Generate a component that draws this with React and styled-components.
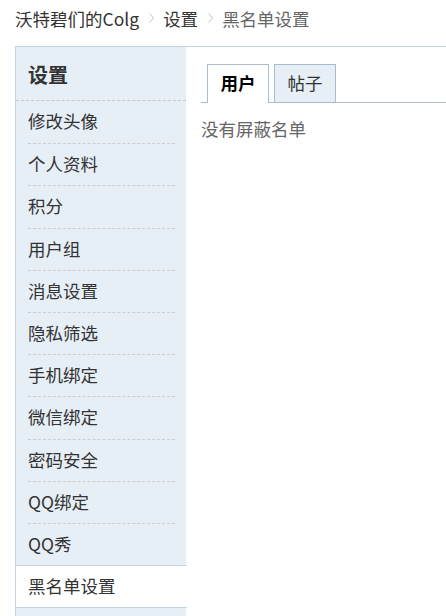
import React from 'react';
import styled, { createGlobalStyle } from 'styled-components';

const GlobalStyle = createGlobalStyle`
  body {
    margin: 0;
    background: #fff;
    font-family: 'Microsoft YaHei', 'Noto Sans CJK SC', sans-serif;
    color: #333;
  }
`;

const Page = styled.div`
  width: 446px;
  height: 616px;
  overflow: hidden;
`;

const Crumbs = styled.div`
  display: flex;
  align-items: center;
  height: 46px;
  padding: 0 0 10px 15px;
  box-sizing: border-box;
  font-size: 17.5px;

  span {
    color: #333;
  }

  span.last {
    color: #666;
  }
`;

const Chevron = styled.svg`
  width: 5px;
  height: 10px;
  margin: 0 9px 0 10px;
  flex: none;
`;

const Layout = styled.div`
  display: flex;
  margin-left: 15px;
  border-top: 1px solid #c2d5e3;
  min-height: 569px;
`;

const Side = styled.div`
  width: 170px;
  flex: none;
  background: #e6eef6;
  border-left: 1px solid #c2d5e3;
`;

const SideTitle = styled.h2`
  margin: 0;
  height: 54px;
  padding-left: 12px;
  box-sizing: border-box;
  border-bottom: 1px dashed #c8c8c8;
  font-size: 20px;
  font-weight: 700;
  line-height: 56px;
  color: #333;
`;

const Menu = styled.ul`
  margin: 0;
  padding: 0;
  list-style: none;
`;

const MenuItem = styled.li`
  padding: 0 11px 0 12px;
  background: ${({ $active }) => ($active ? '#fff' : 'transparent')};
  border-top: ${({ $active }) => ($active ? '1px solid #c2d5e3' : 'none')};
  border-bottom: ${({ $active }) => ($active ? '1px solid #c2d5e3' : 'none')};
  margin-right: ${({ $active }) => ($active ? '-1px' : '0')};

  a {
    display: block;
    height: ${({ $active }) => ($active ? '41px' : '42.2px')};
    box-sizing: border-box;
    border-top: ${({ $first, $active }) => ($first || $active ? 'none' : '1px dashed #cdcdcd')};
    font-size: 17.5px;
    line-height: 39px;
    color: #333;
    text-decoration: none;
    white-space: nowrap;
  }
`;

const Main = styled.div`
  flex: 1;
  padding: 17px 0 0 15px;
`;

const Tabs = styled.ul`
  display: flex;
  gap: 5px;
  margin: 0;
  padding: 0 0 0 6px;
  height: 38px;
  list-style: none;
  border-bottom: 1px solid #a9bccd;
`;

const Tab = styled.li`
  height: ${({ $active }) => ($active ? '39px' : '38px')};
  box-sizing: border-box;
  padding: 0 12.5px;
  border: 1px solid #a9bccd;
  border-bottom: none;
  background: ${({ $active }) => ($active ? '#fff' : '#e6eef6')};
  font-size: 17.5px;
  font-weight: ${({ $active }) => ($active ? 700 : 400)};
  line-height: 36px;
  color: ${({ $active }) => ($active ? '#000' : '#333')};
`;

const Empty = styled.p`
  margin: 13px 0 0;
  font-size: 17.5px;
  line-height: 26px;
  color: #666;
`;

const Arrow = () => (
  <Chevron viewBox="0 0 5 10">
    <path d="M0.5 0.5 L4.5 5 L0.5 9.5" fill="none" stroke="#c4c4c4" strokeWidth="1" />
  </Chevron>
);

const items = [
  '修改头像',
  '个人资料',
  '积分',
  '用户组',
  '消息设置',
  '隐私筛选',
  '手机绑定',
  '微信绑定',
  '密码安全',
  'QQ绑定',
  'QQ秀',
];

const App = () => (
  <Page>
    <GlobalStyle />
    <Crumbs>
      <span>沃特碧们的Colg</span>
      <Arrow />
      <span>设置</span>
      <Arrow />
      <span className="last">黑名单设置</span>
    </Crumbs>

    <Layout>
      <Side>
        <SideTitle>设置</SideTitle>
        <Menu>
          {items.map((item, i) => (
            <MenuItem key={item} $first={i === 0}>
              <a href="#">{item}</a>
            </MenuItem>
          ))}
          <MenuItem $active>
            <a href="#">黑名单设置</a>
          </MenuItem>
        </Menu>
      </Side>

      <Main>
        <Tabs>
          <Tab $active>用户</Tab>
          <Tab>帖子</Tab>
        </Tabs>
        <Empty>没有屏蔽名单</Empty>
      </Main>
    </Layout>
  </Page>
);

export default App;
